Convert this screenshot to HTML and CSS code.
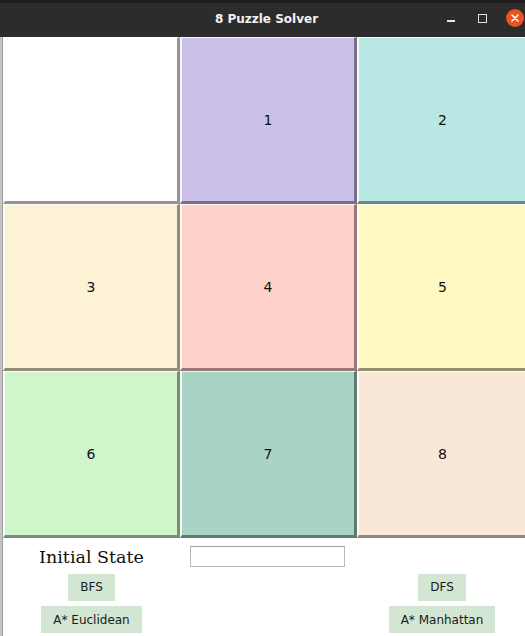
FILE: index.html
```html
<!DOCTYPE html>
<html>
<head>
<meta charset="utf-8">
<link rel="stylesheet" href="styles.css">
</head>
<body>
<div class="screen">
  <div class="topstrip"></div>
  <div class="titlebar">
    <div class="title">8 Puzzle Solver</div>
    <div class="winctl">
      <span class="minimize"></span>
      <span class="maximize"></span>
      <span class="close">
        <svg width="18" height="18" viewBox="0 0 18 18"><path d="M6 6 L12 12 M12 6 L6 12" stroke="#fff" stroke-width="1.6" stroke-linecap="round"/></svg>
      </span>
    </div>
  </div>
  <div class="body">
    <div class="edge"></div>
    <div class="window">
      <div class="grid">
        <div class="tile t0"></div>
        <div class="tile t1">1</div>
        <div class="tile t2">2</div>
        <div class="tile t3">3</div>
        <div class="tile t4">4</div>
        <div class="tile t5">5</div>
        <div class="tile t6">6</div>
        <div class="tile t7">7</div>
        <div class="tile t8">8</div>
      </div>
      <div class="controls">
        <div class="cell"><span class="label">Initial State</span></div>
        <div class="cell"><input class="entry" type="text"></div>
        <div class="cell"></div>
        <div class="cell"><button class="btn">BFS</button></div>
        <div class="cell"></div>
        <div class="cell"><button class="btn">DFS</button></div>
        <div class="cell"><button class="btn">A* Euclidean</button></div>
        <div class="cell"></div>
        <div class="cell"><button class="btn">A* Manhattan</button></div>
      </div>
    </div>
  </div>
</div>
</body>
</html>
```
FILE: styles.css
```css
html, body {
  margin: 0;
  padding: 0;
  background: #ffffff;
}
.screen {
  width: 525px;
  height: 636px;
  overflow: hidden;
  display: flex;
  flex-direction: column;
}
.topstrip {
  height: 3px;
  background: #1e1e1e;
}
.titlebar {
  height: 34px;
  background: #2c2c2c;
  display: flex;
  align-items: center;
  justify-content: center;
  position: relative;
  flex-shrink: 0;
}
.title {
  color: #f2f2f2;
  font-family: "DejaVu Sans", sans-serif;
  font-weight: bold;
  font-size: 12px;
  margin-left: 8px;
  margin-top: -2px;
}
.winctl {
  position: absolute;
  right: 1px;
  top: 6px;
  display: flex;
  align-items: center;
}
.minimize {
  width: 8px;
  height: 1.5px;
  background: #e8e8e8;
  margin-top: 6px;
  margin-right: 23px;
}
.maximize {
  width: 7px;
  height: 7px;
  border: 1px solid #e0e0e0;
  margin-right: 19px;
}
.close {
  width: 18px;
  height: 18px;
  border-radius: 50%;
  background: #e9541f;
  display: flex;
}
.body {
  flex: 1;
  display: flex;
  min-height: 0;
}
.edge {
  width: 3px;
  flex-shrink: 0;
  background: #c4c4c4;
  border-right: 1px solid #9e9e9e;
  box-sizing: border-box;
}
.window {
  flex: 1;
  overflow: hidden;
  background: #ffffff;
}
.grid {
  display: grid;
  grid-template-columns: 177px 177px 172px;
  grid-template-rows: 167px 167px 167px;
}
.tile {
  box-sizing: border-box;
  border-style: solid;
  border-width: 1px 3px 3px 2px;
  border-color: rgba(255,255,255,0.85) rgba(0,0,0,0.42) rgba(0,0,0,0.42) rgba(255,255,255,0.85);
  display: flex;
  align-items: center;
  justify-content: center;
  font-family: "DejaVu Sans", sans-serif;
  font-size: 14px;
  color: #111;
}
.t0 { background: #ffffff; }
.t1 { background: #cbc0e9; }
.t2 { background: #b9e8e4; }
.t3 { background: #fdf1d6; }
.t4 { background: #ffd1cb; }
.t5 { background: #fff8c1; }
.t6 { background: #d0f5cb; }
.t7 { background: #a8d3c5; }
.t8 { background: #f9e8d8; }
.controls {
  display: grid;
  grid-template-columns: 177px 177px 170px;
  grid-template-rows: 33px 32px 33px;
}
.cell {
  display: flex;
  align-items: center;
  justify-content: center;
}
.label {
  font-family: "DejaVu Serif", serif;
  font-size: 17.5px;
  color: #111;
  margin-top: 4px;
}
.entry {
  box-sizing: border-box;
  width: 155px;
  height: 21px;
  margin: 4px 2px 0 0;
  padding: 0;
  border: 1px solid #b8b8b8;
  border-top-color: #a0a0a0;
  background: #ffffff;
  outline: none;
}
.btn {
  border: none;
  background: #d3e5d3;
  font-family: "DejaVu Sans", sans-serif;
  font-size: 12px;
  color: #1a1a1a;
  height: 27px;
  padding: 0 12px;
  margin: 0;
}
```
